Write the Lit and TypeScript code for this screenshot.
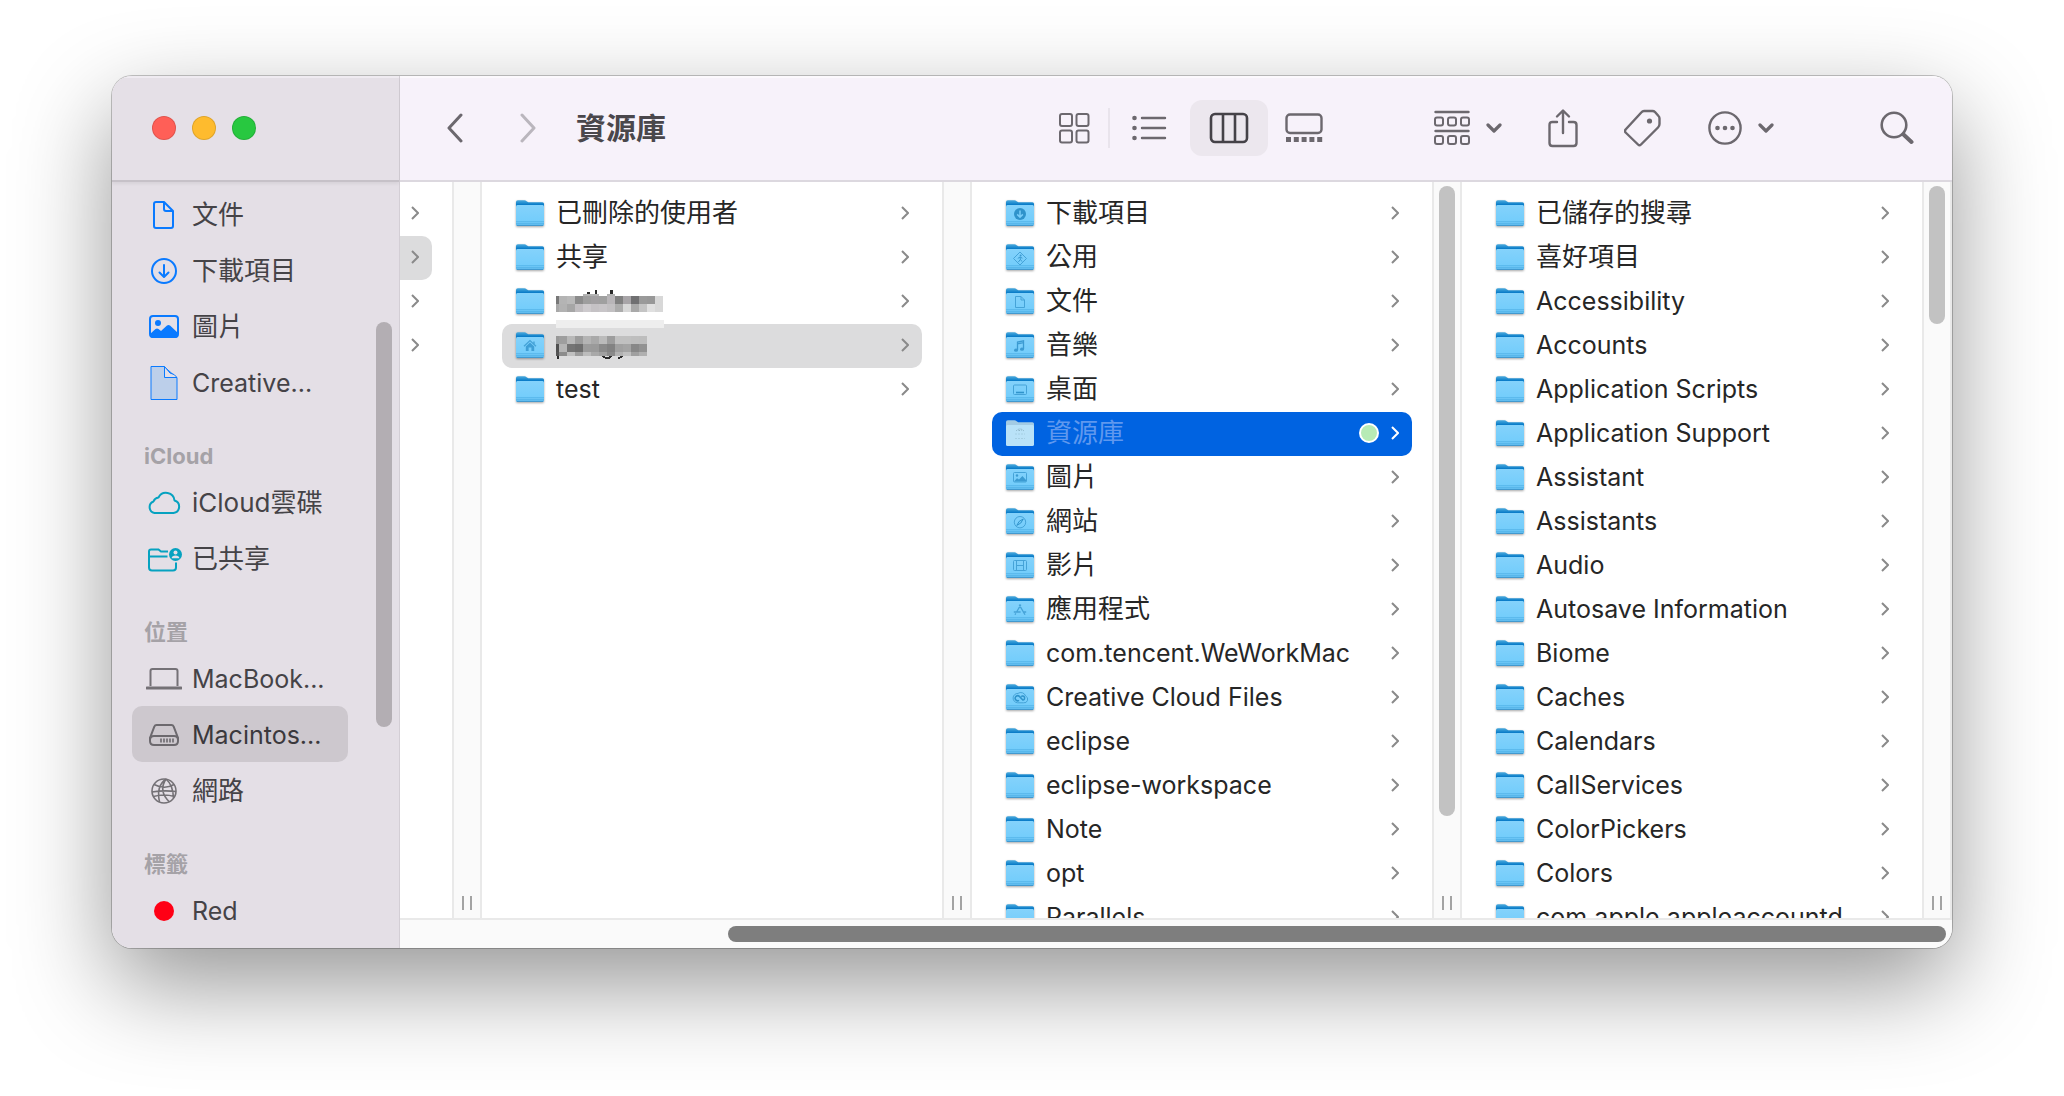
import { LitElement, html, svg, css, nothing } from "lit";
import { customElement, property } from "lit/decorators.js";
import { classMap } from "lit/directives/class-map.js";
import { styleMap } from "lit/directives/style-map.js";

type Entry = { name: string; glyph?: string; selected?: "active" | "path"; tag?: string; masked?: string };
type Column = { label: string; entries: Entry[]; thumb?: number; cut?: boolean };
type Place = { name: string; icon: string; selected?: boolean };
type Section = { title?: string; places: Place[] };

const sections: Section[] = [
  {
    places: [
      { name: "文件", icon: "doc" },
      { name: "下載項目", icon: "download" },
      { name: "圖片", icon: "picture" },
      { name: "Creative...", icon: "file" },
    ],
  },
  {
    title: "iCloud",
    places: [
      { name: "iCloud雲碟", icon: "cloud" },
      { name: "已共享", icon: "shared" },
    ],
  },
  {
    title: "位置",
    places: [
      { name: "MacBook...", icon: "laptop" },
      { name: "Macintos...", icon: "disk", selected: true },
      { name: "網路", icon: "globe" },
    ],
  },
  { title: "標籤", places: [{ name: "Red", icon: "red" }] },
];

/* Chinese names are set one size larger than Latin ones. */
const isChinese = (name: string) => /[\u4e00-\u9fff]/.test(name);

const plain = (...names: string[]): Entry[] => names.map((name) => ({ name }));

const columns: Column[] = [
  {
    label: "1",
    cut: true,
    entries: [{ name: "" }, { name: "", selected: "path" }, { name: "" }, { name: "" }],
  },
  {
    label: "2",
    entries: [
      { name: "已刪除的使用者" },
      { name: "共享" },
      { name: "", masked: "first" },
      { name: "", masked: "second", glyph: "home", selected: "path" },
      { name: "test" },
    ],
  },
  {
    label: "3",
    thumb: 87,
    entries: [
      { name: "下載項目", glyph: "download" },
      { name: "公用", glyph: "public" },
      { name: "文件", glyph: "doc" },
      { name: "音樂", glyph: "music" },
      { name: "桌面", glyph: "desktop" },
      { name: "資源庫", glyph: "library", selected: "active", tag: "green" },
      { name: "圖片", glyph: "picture" },
      { name: "網站", glyph: "compass" },
      { name: "影片", glyph: "film" },
      { name: "應用程式", glyph: "apps" },
      { name: "com.tencent.WeWorkMac" },
      { name: "Creative Cloud Files", glyph: "cc" },
      ...plain("eclipse", "eclipse-workspace", "Note", "opt", "Parallels"),
    ],
  },
  {
    label: "4",
    thumb: 19,
    entries: plain(
      "已儲存的搜尋",
      "喜好項目",
      "Accessibility",
      "Accounts",
      "Application Scripts",
      "Application Support",
      "Assistant",
      "Assistants",
      "Audio",
      "Autosave Information",
      "Biome",
      "Caches",
      "Calendars",
      "CallServices",
      "ColorPickers",
      "Colors",
      "com.apple.appleaccountd",
    ),
  },
];

const glyphs: Record<string, unknown> = {
  home: svg`<path d="M8 14.2 L14 8.6 L20 14.2 M18 9.5 V12" fill="none" stroke="#45a3d8" stroke-width="1.4"/><path d="M9.8 14.4 L14 10.6 L18.2 14.4 V19 H15.4 V15.4 H12.6 V19 H9.8Z" fill="#3f9fd6"/>`,
  download: svg`<circle cx="14" cy="14" r="6" fill="#2f93cb"/><path d="M14 10.5 V17 M11.2 14.4 L14 17.2 L16.8 14.4" fill="none" stroke="#79cdf9" stroke-width="1.5"/>`,
  public: svg`<path d="M14 8 L20.5 14.5 L14 21 L7.5 14.5Z" fill="none" stroke="#45a3d8"/><circle cx="14.6" cy="11.6" r="1" fill="#3b9bd2"/><path d="M11.8 14.4 L14 13 L14.4 15.4 L12.4 18 M14.4 15.4 L16 17.6 M14 13 L16.4 14.2" fill="none" stroke="#3b9bd2"/>`,
  doc: svg`<path d="M9.5 8.5 H15 L18.5 12 V19.5 H9.5Z M15 8.5 V12 H18.5" fill="none" stroke="#45a3d8"/>`,
  music: svg`<path d="M11.5 18 V10 L17.5 8.8 V17 M11.5 11.8 L17.5 10.6" fill="none" stroke="#3b9bd2" stroke-width="1.3"/><ellipse cx="10" cy="18.2" rx="2" ry="1.6" fill="#3b9bd2"/><ellipse cx="16" cy="17.2" rx="2" ry="1.6" fill="#3b9bd2"/>`,
  desktop: svg`<rect x="7.5" y="9" width="13" height="9.5" rx="1" fill="none" stroke="#45a3d8"/><path d="M10 16.5 H18" stroke="#2f93cb" stroke-width="1.6"/>`,
  library: svg`<path d="M10 11 Q14 7 18 11 M12.5 10.5 H15.5" fill="none" stroke="#8db4c6" stroke-dasharray="1.5 1"/><path d="M9.5 14 H19 M9.5 18.5 H19" stroke="#93bccf" stroke-dasharray="1 2"/>`,
  picture: svg`<rect x="7.5" y="8.5" width="13" height="9.5" rx="1" fill="none" stroke="#45a3d8"/><circle cx="11" cy="11.5" r="1.2" fill="#3b9bd2"/><path d="M8 17.5 L11 14.2 L13 15.6 L16.4 12 L20 16 V17.6Z" fill="#3b9bd2"/>`,
  compass: svg`<circle cx="14" cy="14.2" r="5.7" fill="none" stroke="#45a3d8"/><path d="M17.2 11 L14.8 15 L10.8 17.4 L13.2 13.4Z" fill="none" stroke="#2f93cb"/>`,
  film: svg`<rect x="7.5" y="8.5" width="13" height="10" rx="1" fill="none" stroke="#45a3d8"/><path d="M10.5 8.5 V18.5 M17.5 8.5 V18.5 M10.5 13.5 H17.5" stroke="#45a3d8"/>`,
  apps: svg`<path d="M14.8 8.6 L10.6 16 M9.8 17.4 L9 18.8 M13.2 8.6 L17.4 16 L19 18.8 M7.8 16 H14.6 M17.4 16 H20.2" fill="none" stroke="#45a3d8" stroke-width="1.3"/>`,
  cc: svg`<path d="M12 9.4 A5 5 0 0 1 19.6 12 A3.6 3.6 0 0 1 17.4 18.8 H11.6 A4.6 4.6 0 0 1 12 9.4Z" fill="none" stroke="#45a3d8"/><path d="M13 16.4 A2.5 2.5 0 1 1 13.4 12.4 L16.8 16 A2 2 0 1 0 15.2 12.6" fill="none" stroke="#2f93cb" stroke-width="1.5"/>`,
};

const folder = (glyph?: string) => {
  const pale = glyph === "library";
  return html`<svg class="folder" viewBox="0 0 28 28" aria-hidden="true">
    <path d="M0 2 Q0 .3 1.8 .3 H8.4 Q9.6 .3 10.6 1.2 L12.2 2.2 H26.4 Q28 2.2 28 3.8 V22 H0Z" fill=${pale ? "#a3cbe4" : "url(#tab)"}/>
    <path d="M0 6.6 Q0 5 1.4 5 H26.6 Q28 5 28 6.6 V24.4 Q28 26 26.4 26 H1.6 Q0 26 0 24.4Z" fill=${pale ? "#b9e2f8" : "url(#front)"}/>
    ${pale ? nothing : svg`<path d="M0 21.5 H28 M0 23.5 H28" stroke="#4fb0e6" stroke-opacity=".6"/><path d="M1 25.5 H27" stroke="#4299cf"/>`}
    ${glyph ? glyphs[glyph] : nothing}
  </svg>`;
};

const chevron = html`<svg class="chevron" viewBox="0 0 8 14" aria-hidden="true"><path d="M1 1 L7 7 L1 13"/></svg>`;

/* Mosaic cells: each run is [y, height, colours]; the first cell is 3px wide, the rest 8px. */
const mosaics: Record<string, { runs: [number, number, string[]][]; marks: unknown }> = {
  first: {
    runs: [
      [16, 8, ["787878", "b4b4b4", "b9b9b9", "8c8c8c", "9e9e9e", "a2a0a2", "a0a0a0", "b8b5b8", "808080", "a8a5a8", "707072", "9a9a9a", "989898", "d8d8d8"]],
      [24, 8, ["a8a8a8", "b2b2b2", "a6a6a6", "c1bec1", "cdcacd", "c5c2c5", "c8c5c8", "c2c0c2", "acacac", "d8d8d8", "a9a9a9", "c4c4c4", "e0e0e0", "d8d8d8"]],
    ],
    marks: svg`<path d="M27 14 H43 V16 H27Z M51 14 H59 V16 H51Z" fill="#b2b2b2"/><path d="M31 12 H34 V14 H31Z M39 10 H41 V14 H39Z M54 10 H57 V14 H54Z" fill="#2a2a2a"/><rect y="40" width="108" height="4" fill="#eeeeee"/>`,
  },
  second: {
    runs: [
      [12, 8, ["989898", "9e9e9e", "b8b8b8", "9c9c9c", "b4b4b4", "a9a9a9", "bbbbbb", "9d9d9d", "c0c0c0", "c0c0c0", "bebebe", "bdbdbd"]],
      [20, 8, ["505050", "b5b5b5", "747474", "6e6e6e", "9b9b9b", "9a9a9a", "8a8a8a", "828282", "a0a0a0", "a4a4a4", "888888", "929292"]],
      [28, 4, ["555555", "8c8c8c", "c0c0c0", "9c9c9c", "bcbcbc", "a9a9a9", "a0a0a0", "8a8a8a", "b2b2b2", "c0c0c0", "a0a0a0", "b0b0b0"]],
    ],
    marks: svg`<rect width="108" height="4" fill="#eeeeee"/><path d="M1 32 H3 V35 H1Z" fill="#2a2a2a"/><path d="M47 32 Q51 36 56 32 M62 34 Q65 34 66 32" fill="none" stroke="#2a2a2a" stroke-width="2"/>`,
  },
};

const mosaic = (kind: string) => html`<svg class="mosaic" viewBox="0 0 110 42" shape-rendering="crispEdges" role="img">
  ${mosaics[kind].marks}
  ${mosaics[kind].runs.map(([y, h, cells]) =>
    cells.map((c, i) => svg`<rect x=${i ? i * 8 - 5 : 0} y=${y} width=${i ? 8 : 3} height=${h} fill=${"#" + c}/>`),
  )}
</svg>`;

const placeIcons: Record<string, unknown> = {
  doc: svg`<g fill="none" stroke="#0a7aff" stroke-width="2" stroke-linejoin="round"><path d="M10 5 H18 L27 14 V29 Q27 31 25 31 H10 Q8 31 8 29 V7 Q8 5 10 5Z"/><path d="M18 5 V12 Q18 14 20 14 H27"/></g>`,
  download: svg`<g fill="none" stroke="#0a7aff" stroke-width="2" stroke-linecap="round" stroke-linejoin="round"><circle cx="18" cy="18" r="12"/><path d="M18 12 V23.5 M13.5 19.5 L18 24 L22.5 19.5"/></g>`,
  picture: svg`<rect x="4" y="7" width="28" height="21" rx="3" fill="none" stroke="#0a7aff" stroke-width="2"/><circle cx="12" cy="14" r="3" fill="#0a7aff"/><path d="M4 25 L9.5 20 Q11 19 12.5 20 L15 22 L21 16.5 Q22.5 15.5 24 16.5 L32 24 V26 Q32 29 29 29 H7 Q4 29 4 26Z" fill="#0a7aff"/>`,
  file: svg`<path d="M5 1.5 H18 L31 13 V34.5 H5Z" fill="#bccfea" stroke="#0a7aff"/><path d="M18.5 1.5 V12.5 H31 Q29 9 24 8Z" fill="#e4dfe6" stroke="#0a7aff"/>`,
  cloud: svg`<path d="M8.5 28 A6 6 0 0 1 7.5 16.5 A6 6 0 0 1 12.5 12.5 A8.5 8.5 0 0 1 28.5 15.5 A6.4 6.4 0 0 1 27.5 28Z" fill="none" stroke="#06a2c0" stroke-width="2" stroke-linejoin="round"/>`,
  shared: svg`<path d="M22 10.5 H15 L12.5 8.5 H5 Q3 8.5 3 10.5 V26.5 Q3 29.5 6 29.5 H27 Q30 29.5 30 26.5 V21.5 M3 15.5 H21.5" fill="none" stroke="#06a2c0" stroke-width="2"/><circle cx="29.5" cy="13.5" r="6.5" fill="#06a2c0"/><circle cx="29.5" cy="11.4" r="2" fill="#e4dfe6"/><path d="M25.6 17.2 Q26 14.6 29.5 14.6 Q33 14.6 33.4 17.2Z" fill="#e4dfe6"/>`,
  laptop: svg`<g fill="none" stroke="#747176" stroke-width="2"><path d="M4.5 25 V10 Q4.5 8 6.5 8 H29.5 Q31.5 8 31.5 10 V25"/><path d="M1 27 H35" stroke-width="3" stroke-linecap="round"/></g>`,
  disk: svg`<g fill="none" stroke="#6c696e" stroke-width="2"><path d="M10.5 8 H25.5 Q27 8 27.7 9.6 L32 21 V24 Q32 28 28 28 H8 Q4 28 4 24 V21 L8.3 9.6 Q9 8 10.5 8Z"/><path d="M4 23 Q4 19 8 19 H28 Q32 19 32 23"/><path d="M15 21.5 V25.5 M18 21.5 V25.5 M21 21.5 V25.5 M24 21.5 V25.5 M27 21.5 V25.5" stroke-width="1.6"/></g>`,
  globe: svg`<g fill="none" stroke="#747176" stroke-width="1.6"><circle cx="18" cy="18" r="12"/><path d="M20 6 Q10 13 13.5 29 M20 6 Q12 18 23.5 29 M20 6 Q27 12 27.5 25 M8 11.5 Q19 17 28 11.5 M6 19 Q18 17 30 18.5 M7.5 23.5 Q18 20.5 28.5 23.5"/></g>`,
  red: svg`<circle cx="18" cy="18" r="10" fill="#ff0015"/>`,
};

@customElement("finder-column")
export class FinderColumn extends LitElement {
  @property({ attribute: false }) column!: Column;

  static styles = css`
    :host { display: flex; flex: none; width: 490px; min-height: 0; overflow: hidden; background: #fff; }
    .entries { flex: 1; min-width: 0; margin: 0; padding: 10px 20px 0; list-style: none; }
    .entry {
      display: flex; align-items: center; gap: 12px; width: 100%; height: 44px; padding: 0 13px 2px 14px;
      border: 0; border-radius: 10px; background: none; color: #262626; text-align: left;
      font: 400 25px/42px Inter, "Noto Sans CJK TC", sans-serif;
    }
    .chinese { font-size: 26px; }
    .path { background: #dcdcdd; }
    .active { background: #0063e1; color: #5f98ee; }
    .defs { position: absolute; }
    .folder { flex: none; width: 28px; height: 28px; margin-top: 2px; filter: drop-shadow(0 1px 1px rgba(0, 0, 0, 0.35)); }
    .active .folder { filter: none; }
    .name { flex: 1; min-width: 0; white-space: nowrap; }
    .mosaic { display: block; width: 110px; height: 42px; overflow: visible; }
    .tag { flex: none; width: 16px; height: 16px; border: 2px solid #fff; border-radius: 50%; background: #b7ebb5; }
    .chevron { flex: none; width: 8px; height: 14px; fill: none; stroke: #8a8a8a; stroke-width: 2; }
    .active .chevron { stroke: #fff; }
    .track {
      box-sizing: border-box; display: flex; flex-direction: column; justify-content: space-between; align-items: center;
      flex: none; width: 30px; padding: 4px 0 8px; border: solid #e9e9e9; border-width: 0 2px; background: #fafafa;
    }
    .thumb { width: 16px; border-radius: 8px; background: #c2c2c2; }
    .grip { width: 6px; height: 14px; margin-top: auto; border: solid #a3a3a3; border-width: 0 2px; }
  `;

  render() {
    const { entries, thumb, cut } = this.column;
    return html`
      <svg class="defs" width="0" height="0" aria-hidden="true">
        <linearGradient id="tab" x2="0" y2="1"><stop offset="0" stop-color="#4aaade"/><stop offset=".2" stop-color="#0a7cc8"/></linearGradient>
        <linearGradient id="front" x2="0" y2="1"><stop offset="0" stop-color="#84d2fb"/><stop offset=".75" stop-color="#74cdfb"/><stop offset="1" stop-color="#5ab6ea"/></linearGradient>
      </svg>
      <ul class="entries">
        ${entries.map(
          (e) => html`<li>
            <button class=${classMap({ entry: true, chinese: isChinese(e.name), active: e.selected === "active", path: e.selected === "path" })}>
              ${cut ? nothing : folder(e.glyph)}
              <span class="name">${e.masked ? mosaic(e.masked) : e.name}</span>
              ${e.tag ? html`<span class="tag"></span>` : nothing}
              ${chevron}
            </button>
          </li>`,
        )}
      </ul>
      <div class="track">
        ${thumb ? html`<div class="thumb" style=${styleMap({ height: `${thumb}%` })}></div>` : nothing}
        <div class="grip"></div>
      </div>
    `;
  }
}

@customElement("finder-sidebar")
export class FinderSidebar extends LitElement {
  static styles = css`
    :host {
      box-sizing: border-box; display: flex; flex-direction: column; flex: none; width: 288px; min-height: 0;
      border-right: 1px solid #d3ced5; background: #e4dfe6;
    }
    .lights {
      box-sizing: border-box; display: flex; align-items: center; gap: 16px; flex: none; height: 106px; padding: 0 40px 2px;
      border-top: 2px solid #efebf1; border-bottom: 2px solid #c6c1c8; background: #e5e0e7;
      box-shadow: 0 2px 3px rgba(0, 0, 0, 0.06);
    }
    .light { width: 24px; height: 24px; padding: 0; border: 1px solid rgba(0, 0, 0, 0.12); border-radius: 50%; }
    .close { background: #ff5f57; }
    .minimize { background: #febb2e; }
    .zoom { background: #28c840; }
    .body { display: flex; flex: 1; min-height: 0; overflow: hidden; }
    .places { flex: 1; min-width: 0; padding: 4px 28px 0 20px; }
    .title { margin: 0; padding: 28px 12px 0; color: #a5a2a7; font: 700 22px/36px Inter, "Noto Sans CJK TC", sans-serif; }
    .place {
      display: flex; align-items: center; gap: 10px; width: 100%; height: 56px; padding: 2px 14px 0; border: 0;
      border-radius: 10px; background: none; color: #454347; text-align: left; white-space: nowrap;
      font: 400 25px/54px Inter, "Noto Sans CJK TC", sans-serif;
    }
    .chinese { font-size: 26px; }
    .selected { background: #cdc8ce; color: #3b393d; }
    .icon { flex: none; width: 36px; height: 36px; }
    .track { display: flex; flex-direction: column; flex: none; width: 16px; padding-right: 7px; }
    .thumb { border-radius: 8px; background: #b3aeb3; }
  `;

  render() {
    const grow = (n: number) => styleMap({ "flex-grow": String(n) });
    return html`
      <div class="lights">
        <button class="light close" aria-label="關閉"></button>
        <button class="light minimize" aria-label="縮到最小"></button>
        <button class="light zoom" aria-label="縮放"></button>
      </div>
      <div class="body">
        <nav class="places">
          ${sections.map(
            (s) => html`
              ${s.title ? html`<h2 class="title">${s.title}</h2>` : nothing}
              ${s.places.map(
                (p) => html`<button class=${classMap({ place: true, chinese: isChinese(p.name), selected: !!p.selected })}>
                  <svg class="icon" viewBox="0 0 36 36" aria-hidden="true">${placeIcons[p.icon]}</svg>${p.name}
                </button>`,
              )}
            `,
          )}
        </nav>
        <div class="track">
          <div style=${grow(140)}></div>
          <div class="thumb" style=${grow(405)}></div>
          <div style=${grow(221)}></div>
        </div>
      </div>
    `;
  }
}

@customElement("finder-toolbar")
export class FinderToolbar extends LitElement {
  static styles = css`
    :host {
      box-sizing: border-box; display: flex; align-items: center; gap: 46px; flex: none; height: 106px; padding: 0 38px 2px 46px;
      border-top: 2px solid #fcf9fd; border-bottom: 2px solid #dcd8df; background: #f7f2fa;
    }
    button { display: flex; align-items: center; justify-content: center; padding: 0; border: 0; background: none; color: #6c686e; }
    svg { display: block; fill: none; stroke: currentColor; stroke-width: 2; }
    .round { stroke-linecap: round; stroke-linejoin: round; }
    .solid { fill: currentColor; stroke: none; }
    .nav { display: flex; gap: 56px; }
    .forward { color: #bab6bd; }
    .title { flex: 1; margin: 0 0 0 -8px; color: #4a474c; white-space: nowrap; font: 700 30px/44px Inter, "Noto Sans CJK TC", sans-serif; }
    .views { display: grid; grid-template-columns: 68px 2px 80px 78px 72px; align-items: center; height: 56px; margin-right: 48px; }
    .views button { height: 56px; border-radius: 12px; }
    .views .current { background: #ece7ee; color: #454248; }
    .divider { height: 40px; background: #e9e4ec; }
    .menu { gap: 16px; }
    .more { margin-right: 60px; }
  `;

  render() {
    const arrow = html`<svg width="16" height="10" viewBox="0 0 16 10" aria-hidden="true"><path class="round" stroke-width="3.2" d="M2 2 L8 8 L14 2"/></svg>`;
    return html`
      <div class="nav">
        <button aria-label="返回"><svg class="round" width="18" height="30" viewBox="0 0 18 30"><path stroke-width="3" d="M15 2 L3 15 L15 28"/></svg></button>
        <button class="forward" aria-label="往前"><svg class="round" width="18" height="30" viewBox="0 0 18 30"><path stroke-width="3" d="M2 2 L14 15 L2 28"/></svg></button>
      </div>
      <h1 class="title">資源庫</h1>
      <div class="views">
        <button aria-label="圖像">
          <svg width="32" height="32" viewBox="0 0 32 32">
            <rect x="2" y="2" width="12" height="12" rx="2"/><rect x="18.5" y="2" width="12" height="12" rx="2"/>
            <rect x="2" y="18.5" width="12" height="12" rx="2"/><rect x="18.5" y="18.5" width="12" height="12" rx="2"/>
          </svg>
        </button>
        <span class="divider"></span>
        <button aria-label="列表">
          <svg width="36" height="26" viewBox="0 0 36 26">
            <path class="round" stroke-width="2.4" d="M10 3 H33 M10 13 H33 M10 23 H33"/>
            <g class="solid"><circle cx="2.5" cy="3" r="2.3"/><circle cx="2.5" cy="13" r="2.3"/><circle cx="2.5" cy="23" r="2.3"/></g>
          </svg>
        </button>
        <button class="current" aria-label="直欄">
          <svg width="40" height="32" viewBox="0 0 40 32">
            <rect x="2" y="2" width="36" height="28" rx="4" stroke-width="2.6"/><path stroke-width="2.6" d="M14 2 V30 M26 2 V30"/>
          </svg>
        </button>
        <button aria-label="圖庫">
          <svg width="38" height="30" viewBox="0 0 38 30">
            <rect x="1.5" y="1.5" width="35" height="18.5" rx="3.5" stroke-width="2.4"/>
            <path stroke-width="5" stroke-dasharray="5 2.8" d="M1 26.5 H37.2"/>
          </svg>
        </button>
      </div>
      <button class="menu" aria-label="群組">
        <svg width="36" height="36" viewBox="0 0 36 36">
          <path stroke-width="2.4" class="round" d="M1.5 2 H34.5 M1.5 21 H34.5"/>
          ${[1, 14, 27].map((x) => svg`<rect x=${x} y="7.5" width="8" height="8" rx="2"/><rect x=${x} y="26" width="8" height="8" rx="2"/>`)}
        </svg>
        ${arrow}
      </button>
      <button aria-label="分享">
        <svg class="round" width="30" height="40" viewBox="0 0 30 40">
          <path stroke-width="2.4" d="M9 14 H4.5 Q1.5 14 1.5 17 V35 Q1.5 38 4.5 38 H25.5 Q28.5 38 28.5 35 V17 Q28.5 14 25.5 14 H21"/>
          <path stroke-width="2.4" d="M15 25 V3 M9 8.5 L15 2.5 L21 8.5"/>
        </svg>
      </button>
      <button aria-label="標籤">
        <svg class="round" width="38" height="38" viewBox="1 0 38 38">
          <path stroke-width="2.4" d="M21 2 H29.5 Q31 2 32 3 L35.5 7 Q36.5 8 36.5 9.5 V15 Q36.5 17 35 18.5 L18 35.5 Q16.5 37 15 35.5 L2.6 23.5 Q1.4 22 2.6 20.5 L18.5 3.2 Q19.5 2 21 2Z"/>
          <circle class="solid" cx="26.5" cy="12" r="2.6"/>
        </svg>
      </button>
      <button class="menu more" aria-label="動作">
        <svg width="34" height="34" viewBox="0 0 34 34">
          <circle cx="17" cy="17" r="15.6" stroke-width="2.4"/>
          <g class="solid"><circle cx="9.5" cy="17" r="2.3"/><circle cx="17" cy="17" r="2.3"/><circle cx="24.5" cy="17" r="2.3"/></g>
        </svg>
        ${arrow}
      </button>
      <button aria-label="搜尋">
        <svg class="round" width="34" height="34" viewBox="0 0 34 34">
          <circle cx="14" cy="14" r="12.3" stroke-width="2.6"/><path stroke-width="4" d="M23.5 23.5 L31.5 31"/>
        </svg>
      </button>
    `;
  }
}

@customElement("app-root")
export class AppRoot extends LitElement {
  static styles = css`
    :host { box-sizing: border-box; display: flex; height: 100vh; padding: 76px 112px 148px; background: #fff; overflow: hidden; }
    .window {
      display: flex; flex: 1; min-width: 0; border-radius: 20px; overflow: hidden; background: #fff;
      box-shadow: 0 0 0 1px rgba(0, 0, 0, 0.22), 0 36px 96px rgba(0, 0, 0, 0.42);
    }
    .main { display: flex; flex-direction: column; flex: 1; min-width: 0; }
    .columns { display: flex; justify-content: flex-end; flex: 1; min-height: 0; overflow: hidden; }
    .scroller { display: flex; flex: none; padding: 6px; border-top: 2px solid #e9e9e9; background: #fafafa; }
    .before { flex: 322; }
    .thumb { flex: 1218; height: 16px; border-radius: 8px; background: #7e7e7e; }
  `;

  render() {
    return html`
      <div class="window">
        <finder-sidebar></finder-sidebar>
        <main class="main">
          <finder-toolbar></finder-toolbar>
          <div class="columns">${columns.map((c) => html`<finder-column .column=${c}></finder-column>`)}</div>
          <div class="scroller"><div class="before"></div><div class="thumb"></div></div>
        </main>
      </div>
    `;
  }
}
